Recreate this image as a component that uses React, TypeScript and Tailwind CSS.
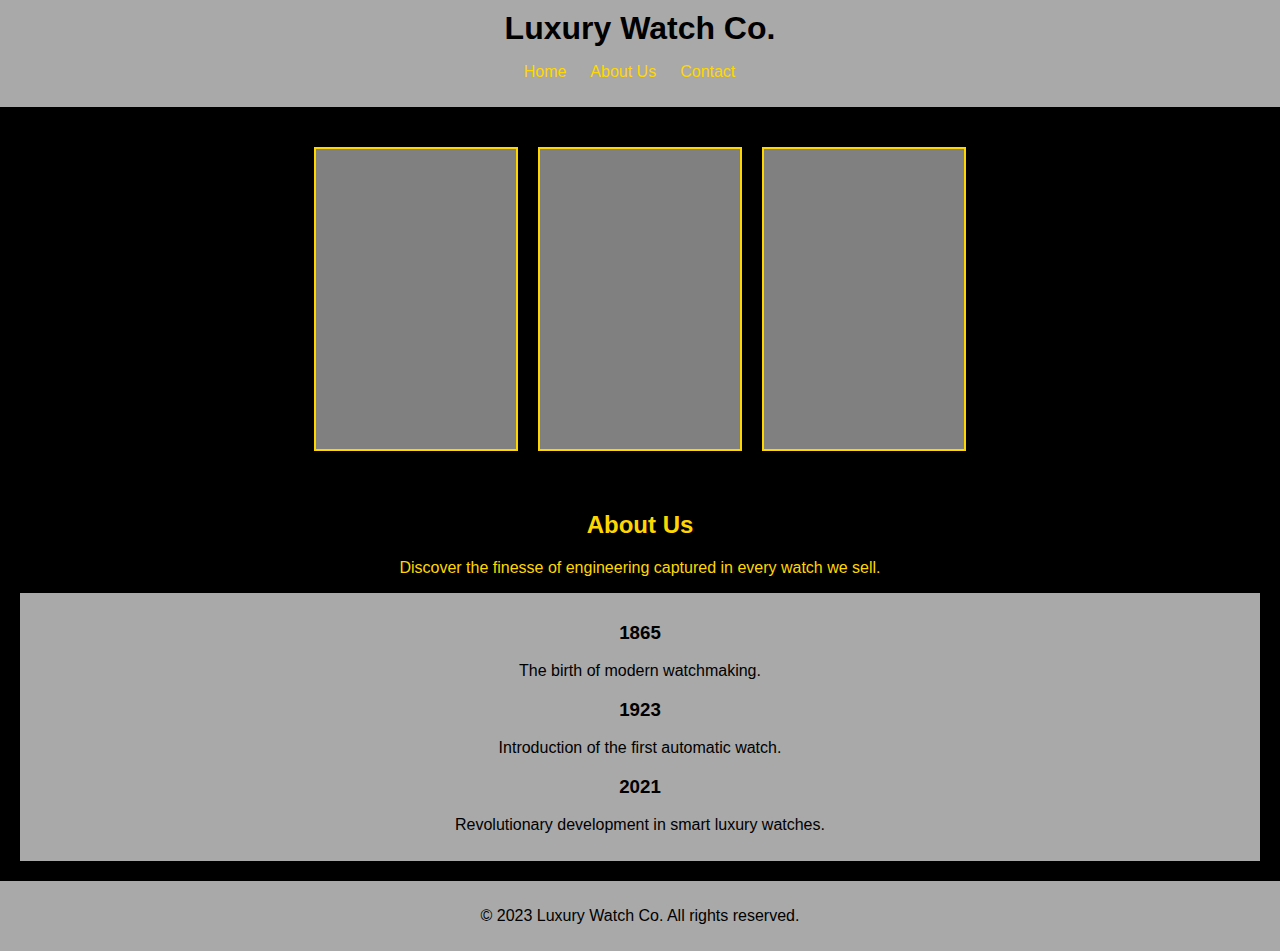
export default function App() {
  const items = [
    { year: "1865", text: "The birth of modern watchmaking." },
    { year: "1923", text: "Introduction of the first automatic watch." },
    { year: "2021", text: "Revolutionary development in smart luxury watches." },
  ];
  return (
    <div className="font-['Liberation_Sans',Arial,sans-serif] text-black">
      <header className="bg-[#a9a9a9] pt-[10px] pb-[26px] text-center">
        <h1 className="text-[32px] font-bold leading-[37px]">Luxury Watch Co.</h1>
        <nav className="mt-[16px] flex justify-center gap-[24px] pr-[21px] text-[16px] leading-[18px] text-[#ffd700]">
          <a>Home</a>
          <a>About Us</a>
          <a>Contact</a>
        </nav>
      </header>
      <main className="bg-black px-[20px] pt-[40px] pb-[20px]">
        <div className="flex justify-center gap-[20px]">
          <div className="w-[204px] h-[304px] border-2 border-[#ffd700] bg-[#808080]" />
          <div className="w-[204px] h-[304px] border-2 border-[#ffd700] bg-[#808080]" />
          <div className="w-[204px] h-[304px] border-2 border-[#ffd700] bg-[#808080]" />
        </div>
        <section className="mt-[60px] text-center">
          <h2 className="text-[24px] font-bold leading-[28px] text-[#ffd700]">About Us</h2>
          <p className="mt-[20px] text-[16px] leading-[18px] text-[#ffd700]">
            Discover the finesse of engineering captured in every watch we sell.
          </p>
          <div className="mt-[16px] bg-[#a9a9a9] pt-[29px] pb-[27px] flex flex-col gap-[19px]">
            {items.map((it) => (
              <div key={it.year} className="flex flex-col gap-[18px]">
                <h3 className="text-[18.72px] font-bold leading-[22px]">{it.year}</h3>
                <p className="text-[16px] leading-[18px]">{it.text}</p>
              </div>
            ))}
          </div>
        </section>
      </main>
      <footer className="h-[70px] bg-[#a9a9a9] flex items-center justify-center text-[16px] leading-[18px]">
        <p>© 2023 Luxury Watch Co. All rights reserved.</p>
      </footer>
    </div>
  );
}
